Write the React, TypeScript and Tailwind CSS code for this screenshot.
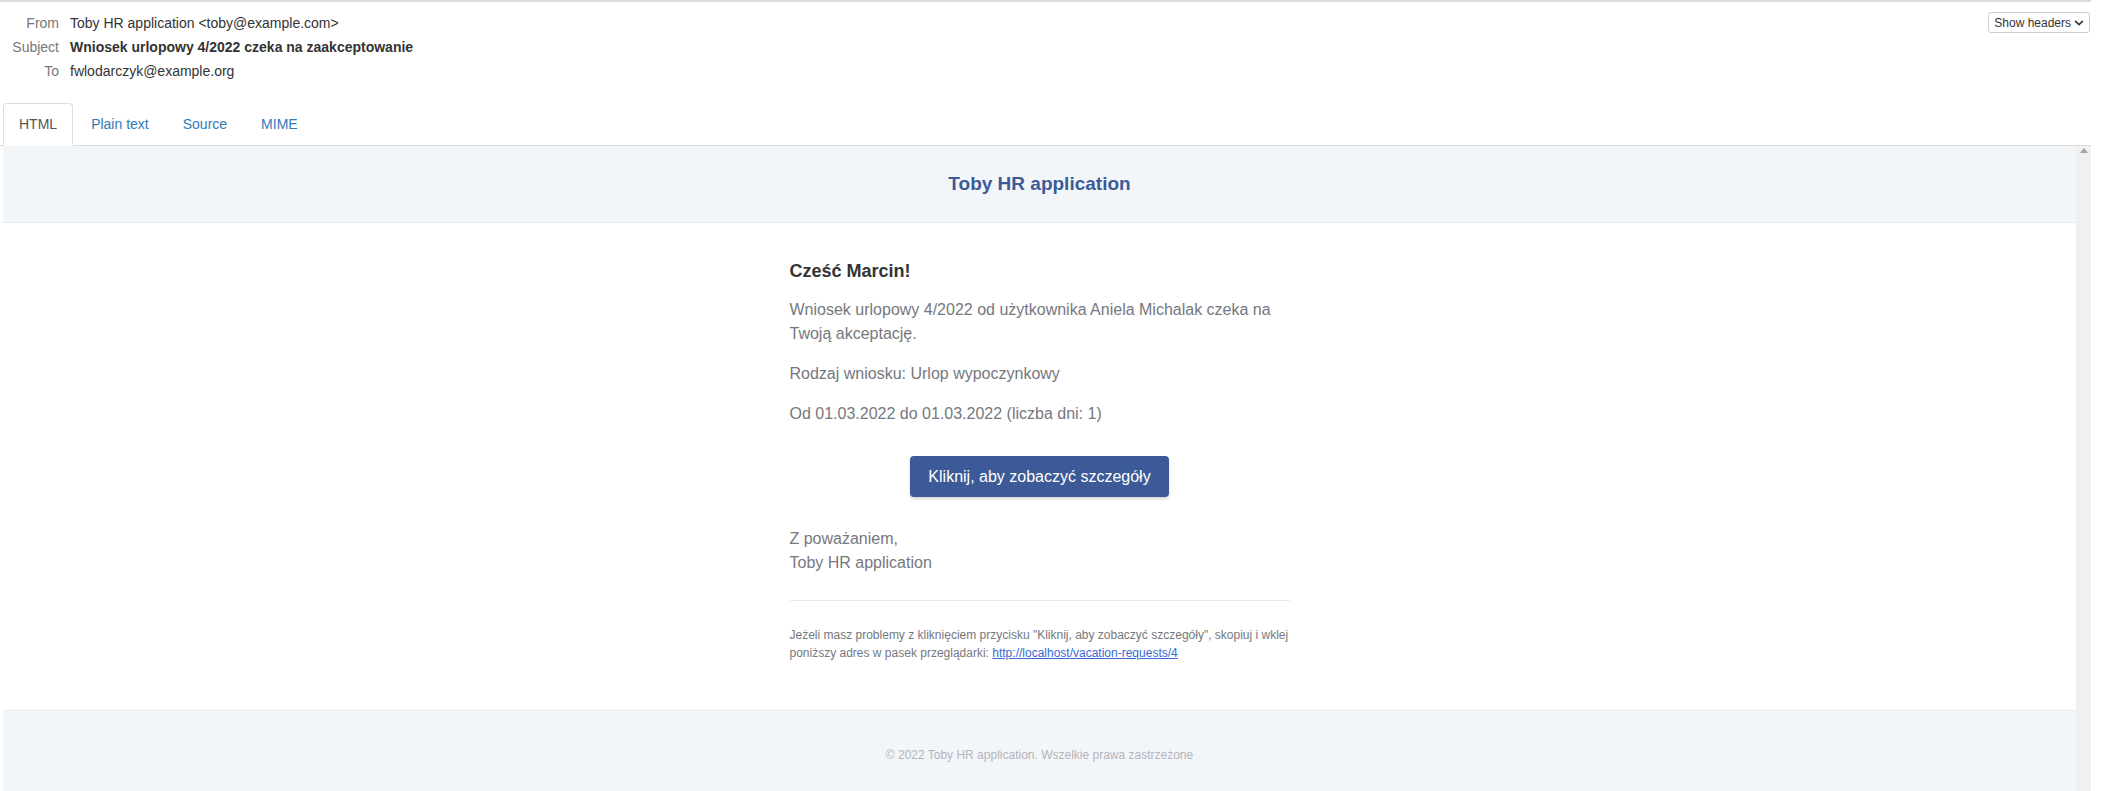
import { FaChevronDown } from 'react-icons/fa';

const font = { fontFamily: '"Liberation Sans", Arial, sans-serif' };

const headers = [
    { label: 'From', value: 'Toby HR application <toby@example.com>', bold: false },
    { label: 'Subject', value: 'Wniosek urlopowy 4/2022 czeka na zaakceptowanie', bold: true },
    { label: 'To', value: 'fwlodarczyk@example.org', bold: false },
];

const tabs = ['HTML', 'Plain text', 'Source', 'MIME'];

function EmailBody() {
    return (
        <div className="flex-1 flex flex-col">
            {/* header */}
            <div className="h-[77px] shrink-0 bg-[#f3f6f9] border-b border-[#e8ebf0] flex items-center justify-center">
                <span className="text-[19px] font-bold text-[#3c5a98]">Toby HR application</span>
            </div>

            {/* body */}
            <div className="flex justify-center bg-white">
                <div className="w-[564px] px-8 pt-[37px] pb-8">
                    <h1 className="text-[18px] leading-[22px] font-bold text-[#333] mb-4">Cześć Marcin!</h1>
                    <p className="text-base leading-6 text-[#75787e] mb-4">
                        Wniosek urlopowy 4/2022 od użytkownika Aniela Michalak czeka na Twoją akceptację.
                    </p>
                    <p className="text-base leading-6 text-[#75787e] mb-4">Rodzaj wniosku: Urlop wypoczynkowy</p>
                    <p className="text-base leading-6 text-[#75787e]">Od 01.03.2022 do 01.03.2022 (liczba dni: 1)</p>

                    <div className="flex justify-center my-[30px]">
                        <a className="h-[41px] px-[18px] flex items-center rounded bg-[#3c5a98] text-white text-base shadow-[0_2px_3px_rgba(0,0,0,0.16)]">
                            Kliknij, aby zobaczyć szczegóły
                        </a>
                    </div>

                    <p className="text-base leading-6 text-[#75787e]">
                        Z poważaniem,
                        <br />
                        Toby HR application
                    </p>

                    <div className="mt-[25px] pt-[25px] border-t border-[#e8e8ec]">
                        <p className="text-xs leading-[18px] text-[#75787e] mb-4">
                            Jeżeli masz problemy z kliknięciem przycisku "Kliknij, aby zobaczyć szczegóły", skopiuj i wklej
                            poniższy adres w pasek przeglądarki:{' '}
                            <a className="text-[#3869d4] underline">http://localhost/vacation-requests/4</a>
                        </p>
                    </div>
                </div>
            </div>

            {/* footer */}
            <div className="flex-1 bg-[#f3f6f9] border-t border-[#e8ebf0] pt-[35px] text-center">
                <p className="text-xs leading-[18px] text-[#b4b3bb]">© 2022 Toby HR application. Wszelkie prawa zastrzeżone</p>
            </div>
        </div>
    );
}

export default function App() {
    return (
        <div className="w-[2104px] h-[791px] overflow-hidden bg-white text-sm text-[#333]" style={font}>
            <div className="w-[2091px] border-t-2 border-[#dcdcdc]">
                {/* message headers */}
                <div className="flex justify-between pt-[9px] pr-px">
                    <div className="grid grid-cols-[59px_1fr] gap-x-[11px]">
                        {headers.map(h => (
                            <div key={h.label} className="contents">
                                <div className="text-right leading-6 text-[#777]">{h.label}</div>
                                <div className={`leading-6 text-[#333] ${h.bold ? 'font-bold' : ''}`}>{h.value}</div>
                            </div>
                        ))}
                    </div>
                    <button className="h-[21px] mt-px px-[5px] border border-[#ccc] rounded-[3px] bg-white flex items-center gap-[3px] text-xs text-[#333]">
                        Show headers
                        <FaChevronDown size={10} />
                    </button>
                </div>

                {/* tabs */}
                <div className="mt-[20px] flex pl-[3px] border-b border-[#ddd]">
                    {tabs.map((t, i) => (
                        <div
                            key={t}
                            className={
                                i === 0
                                    ? '-mb-px mr-[2px] px-[15px] py-[10px] leading-5 border border-[#ddd] border-b-white rounded-t bg-white text-[#555]'
                                    : 'mr-[2px] px-[15px] py-[10px] leading-5 border border-transparent text-[#337ab7]'
                            }
                        >
                            {t}
                        </div>
                    ))}
                </div>

                {/* preview frame */}
                <div className="ml-[3px] h-[645px] flex">
                    <EmailBody />
                    <div className="w-[15px] bg-[#f0f0f0] flex justify-center pt-[2px]">
                        <svg width="8" height="5" viewBox="0 0 8 5">
                            <path d="M4 0 L8 5 L0 5 Z" fill="#a3a3a3" />
                        </svg>
                    </div>
                </div>
            </div>
        </div>
    );
}
